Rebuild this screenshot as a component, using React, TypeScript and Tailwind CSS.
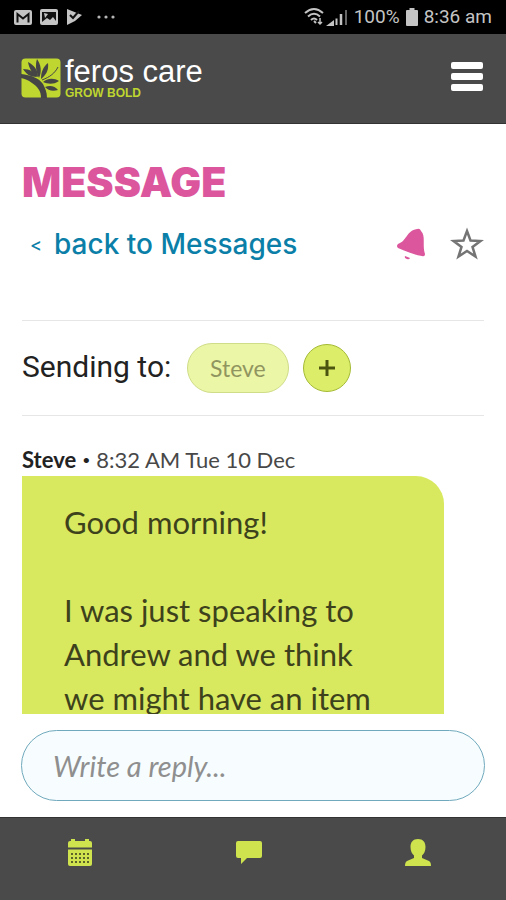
import React from 'react'

const Logo = () => (
  <a href="#home" aria-label="feros care" className="flex items-center gap-1 pb-0.5">
    <svg viewBox="0 0 40 40" className="size-10">
      <rect x="0.5" y="0.5" width="39" height="39" rx="4" fill="#bfd630" />
      <g fill="#454545">
        <path d="M0 16C10 17 18 20 22 26C24 30 26 34 26 40H20C20 33 17 29 11 25C7 22 4 21 0 20Z" />
        <path d="M2 11C9 11 14 14 16 19C9 19 5 16 2 11Z" />
        <path d="M7 4C13 7 17 12 17 19C11 16 8 10 7 4Z" />
        <path d="M16 1C20 7 21 13 18 20C15 14 14 7 16 1Z" />
        <path d="M27 5C28 12 25 17 20 21C20 14 22 9 27 5Z" />
        <path d="M22 24C27 20 33 20 38 23C32 27 27 26 22 24Z" />
        <path d="M24 29C29 27 34 28 37 32C31 34 27 32 24 29Z" />
      </g>
      <path d="M37 9C34 15 29 19 21 22" fill="none" stroke="#454545" strokeWidth="1" />
    </svg>
    <span className="flex flex-col font-['Liberation_Sans','Arial',sans-serif]">
      <span className="text-[31px] leading-[31px] text-white">feros care</span>
      <span className="text-[12px] leading-[12px] font-black text-[#bfd630]">GROW BOLD</span>
    </span>
  </a>
)

const StatusBar = () => (
  <div className="flex h-[34px] shrink-0 items-center justify-between bg-black px-3.5 font-['Roboto',sans-serif] text-[#c4c4c4]">
    <div className="flex items-center gap-2">
      <svg viewBox="0 0 18 15" className="h-[15px] w-[18px]">
        <rect width="18" height="15" rx="2" fill="#c4c4c4" />
        <path d="M3.5 12.5V4L9 8.5L14.5 4V12.5" fill="none" stroke="#111" strokeWidth="2" />
      </svg>
      <svg viewBox="0 0 18 16" className="h-4 w-[18px]">
        <rect width="18" height="16" rx="2" fill="#c4c4c4" />
        <path d="M2 3H16V12L13 8L10 11L7 9L2 13Z" fill="#111" />
        <path d="M4 4L8 5L5 9Z" fill="#c4c4c4" />
      </svg>
      <svg viewBox="0 0 16 16" className="size-4">
        <path d="M1 0L16 6L9 12L1 16Z" fill="#c4c4c4" />
        <path d="M4 6L7 9L13 2" fill="none" stroke="#111" strokeWidth="2" />
      </svg>
      <svg viewBox="0 0 20 4" className="ml-1.5 h-1 w-5" fill="#b5b5b5">
        <circle cx="3" cy="2" r="1.6" />
        <circle cx="10" cy="2" r="1.6" />
        <circle cx="17" cy="2" r="1.6" />
      </svg>
    </div>
    <div className="flex items-center gap-1.5 text-[19px]">
      <svg viewBox="0 0 44 20" className="h-5 w-11" fill="none" stroke="#c4c4c4" strokeWidth="2">
        <path d="M1 6Q10 -2 19 6M4 9.500Q10 4 16 9.500M7 13Q10 10 13 13" />
        <path d="M10 14L12 16" />
        <path d="M16 11V17M14 15L16 17L18 15" strokeWidth="1.500" />
        <path d="M25 18L29 15V18ZM32.500 18V11.500" />
        <path d="M37 18V7" strokeWidth="2.500" />
        <path d="M42 18V3" stroke="#666" />
      </svg>
      <span>100%</span>
      <svg viewBox="0 0 12 18" className="h-[18px] w-3" fill="#c4c4c4">
        <path d="M3.500 0H8.500V2H11Q12 2 12 3V17Q12 18 11 18H1Q0 18 0 17V3Q0 2 1 2H3.500Z" />
      </svg>
      <span>8:36 am</span>
    </div>
  </div>
)

const BottomNav = () => (
  <nav className="flex h-[83px] shrink-0 items-start border-t border-[#333] bg-[#4a4a4a] pt-5">
    <a href="#calendar" aria-label="Calendar" className="flex flex-1 justify-center pr-2">
      <svg viewBox="0 0 26 30" className="h-[30px] w-[26px]">
        <path d="M1 9.500V5Q1 3 3 3H4V1H8V3H18V1H22V3H23Q25 3 25 5V9.500Z" fill="#cfe34f" />
        <path d="M1 11.500H25V26Q25 28 23 28H3Q1 28 1 26Z" fill="#cfe34f" />
        <path d="M4 16H22M4 20H22M4 24H22" stroke="#5c6328" strokeWidth="2" strokeDasharray="2 2" />
      </svg>
    </a>
    <a href="#messages" aria-label="Messages" className="flex flex-1 justify-center pr-2">
      <svg viewBox="0 0 28 30" className="h-[30px] w-7" fill="#cfe34f">
        <path d="M3 3H25Q27 3 27 5V18Q27 20 25 20H12L6 26V20H3Q1 20 1 18V5Q1 3 3 3Z" />
      </svg>
    </a>
    <a href="#profile" aria-label="Profile" className="flex flex-1 justify-center pr-2">
      <svg viewBox="0 0 26 30" className="h-[30px] w-[26px]" fill="#cfe34f">
        <path d="M13 1C18 1 20.500 4 20.500 9C20.500 13 19 16 17 17.500V20L24 23Q26 24 26 28H0Q0 24 2 23L9 20V17.500C7 16 5.500 13 5.500 9C5.500 4 8 1 13 1Z" />
      </svg>
    </a>
  </nav>
)

export default function App() {
  return (
    <div className="flex h-screen flex-col bg-white font-['Lato',sans-serif] text-[#222]">
      <StatusBar />
      <header className="flex h-[90px] shrink-0 items-center justify-between border-b border-[#333] bg-[#4a4a4a] px-[21px]">
        <Logo />
        <button type="button" aria-label="Menu" className="flex w-9 flex-col gap-1 px-0.5 pb-1">
          <span className="h-[7px] w-full rounded-xs bg-white"></span>
          <span className="h-[7px] w-full rounded-xs bg-white"></span>
          <span className="h-[7px] w-full rounded-xs bg-white"></span>
        </button>
      </header>

      <main className="flex min-h-0 flex-1 flex-col px-[22px] pt-9">
        <h1 className="font-['Inter',sans-serif] text-[41px] leading-[44px] font-black text-[#db569c]">MESSAGE</h1>
        <div className="mt-5 flex h-10 items-center justify-between pl-2">
          <a href="#back" className="flex items-center gap-3 font-['Inter',sans-serif] text-[28px] font-medium text-[#0b7fa8]">
            <span className="text-[18px]">&lt;</span>
            <span>back to Messages</span>
          </a>
          <div className="flex items-center gap-6">
            <button type="button" aria-label="Alerts">
              <svg viewBox="0 0 30 34" className="h-[34px] w-[30px]" fill="#db569c">
                <path d="M21 2Q24 1 25 4C30 9 26 18 29 27Q29 30 26 29C18 28 10 24 2 21Q0 19 2 17C11 14 10 4 21 2Z" />
                <path d="M9 29L14 31Q13 33 11 32Q8 31 9 29Z" />
              </svg>
            </button>
            <button type="button" aria-label="Favourite">
              <svg viewBox="0 0 34 34" className="size-[34px]" fill="none" stroke="#747474" strokeWidth="2.500">
                <path d="M17 4L20.500 13.500L30.500 14L22.500 20L25.500 29.500L17 24L8.500 29.500L11.500 20L3.500 14L13.500 13.500Z" />
              </svg>
            </button>
          </div>
        </div>

        <section className="mt-14 flex h-24 shrink-0 items-center border-y border-[#e6e6e6]">
          <h2 className="w-[165px] pb-1 font-['Roboto',sans-serif] text-[30px]">Sending to:</h2>
          <button type="button" className="h-[50px] rounded-full border border-[#cfdc88] bg-[#ecf6a7] px-[22px] text-[23px] text-[#90955f]">Steve</button>
          <button type="button" aria-label="Add recipient" className="ml-3.5 flex size-12 items-center justify-center rounded-full border border-[#a5ba35] bg-[#dcee69]">
            <svg viewBox="0 0 18 18" className="size-[18px]" stroke="#4c5510" strokeWidth="3">
              <path d="M9 1V17M1 9H17" />
            </svg>
          </button>
        </section>

        <p className="mt-7 flex items-center gap-1.5 text-[22px] leading-[32px] text-[#484848]">
          <b className="text-[#222]">Steve</b>
          <span className="text-[14px] text-[#222]">•</span>
          <span>8:32 AM Tue 10 Dec</span>
        </p>
        <div className="mr-10 min-h-0 flex-1 overflow-hidden rounded-tr-[28px] bg-[#d9e95f] px-[42px] pt-6 text-[31px] leading-[44px] text-[#3d421c]">
          <p>Good morning!</p>
          <p className="mt-11">
            I was just speaking to
            <br />
            Andrew and we think
            <br />
            we might have an item
          </p>
        </div>
      </main>

      <form className="shrink-0 px-[21px] py-4">
        <input
          type="text"
          aria-label="Write a reply"
          placeholder="Write a reply..."
          className="h-[71px] w-full rounded-full border border-[#70a9bd] bg-[#f7fdfe] px-[31px] text-[29px] placeholder:text-[#8f8f8f] placeholder:italic"
        />
      </form>
      <BottomNav />
    </div>
  )
}
